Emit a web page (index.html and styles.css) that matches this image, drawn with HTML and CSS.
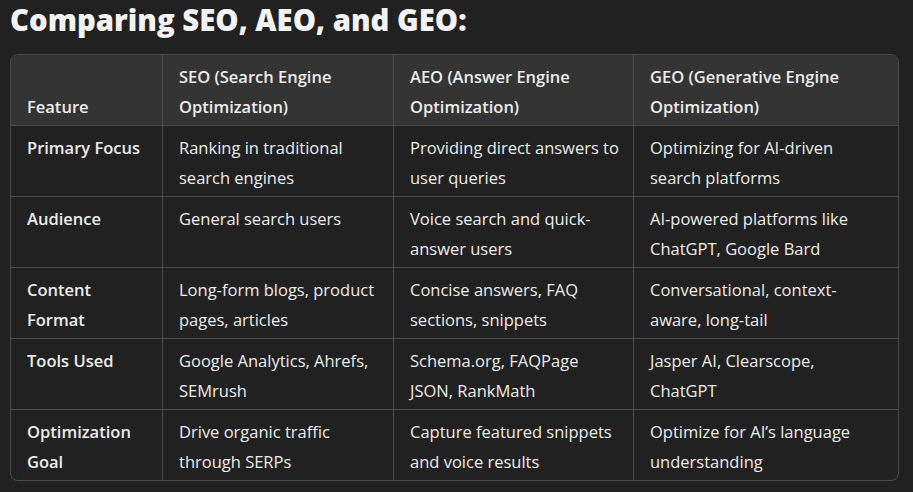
FILE: index.html
```html
<!DOCTYPE html>
<html>
<head>
<meta charset="utf-8">
<link rel="stylesheet" href="styles.css">
</head>
<body>
<h3 class="title">Comparing SEO, AEO, and GEO:</h3>
<div class="table-wrap">
<table class="cmp">
<thead>
<tr><th class="c1">Feature</th><th class="c2">SEO (Search Engine<br>Optimization)</th><th class="c3">AEO (Answer Engine<br>Optimization)</th><th class="c4">GEO (Generative Engine<br>Optimization)</th></tr>
</thead>
<tbody>
<tr><td class="lead">Primary Focus</td><td>Ranking in traditional<br>search engines</td><td>Providing direct answers to<br>user queries</td><td>Optimizing for AI-driven<br>search platforms</td></tr>
<tr><td class="lead">Audience</td><td>General search users</td><td>Voice search and quick-<br>answer users</td><td>AI-powered platforms like<br>ChatGPT, Google Bard</td></tr>
<tr><td class="lead">Content<br>Format</td><td>Long-form blogs, product<br>pages, articles</td><td>Concise answers, FAQ<br>sections, snippets</td><td>Conversational, context-<br>aware, long-tail</td></tr>
<tr><td class="lead">Tools Used</td><td>Google Analytics, Ahrefs,<br>SEMrush</td><td>Schema.org, FAQPage<br>JSON, RankMath</td><td>Jasper AI, Clearscope,<br>ChatGPT</td></tr>
<tr><td class="lead">Optimization<br>Goal</td><td>Drive organic traffic<br>through SERPs</td><td>Capture featured snippets<br>and voice results</td><td>Optimize for AI’s language<br>understanding</td></tr>
</tbody>
</table>
</div>
</body>
</html>
```
FILE: styles.css
```css
html, body {
  margin: 0;
  background: #212121;
}
body {
  padding: 0 10px;
  color: #ececec;
  font-family: "Open Sans", "Noto Sans", sans-serif;
  font-size: 16.5px;
}
.title {
  margin: 0 0 14px;
  font-family: "Open Sans", sans-serif;
  font-weight: 800;
  font-size: 29.3px;
  line-height: 40px;
  color: #f3f3f3;
}
.table-wrap {
  width: 889px;
  border: 1px solid #4b4b4b;
  border-radius: 8px;
  overflow: hidden;
  box-sizing: border-box;
}
.cmp {
  width: 100%;
  border-collapse: separate;
  border-spacing: 0;
  table-layout: fixed;
}
.cmp th, .cmp td {
  text-align: left;
  padding: 7px 8px 3px 16px;
  line-height: 30px;
  height: 60px;
  white-space: nowrap;
  border-right: 1px solid #4b4b4b;
  border-bottom: 1px solid #4b4b4b;
  vertical-align: top;
}
.cmp th:last-child, .cmp td:last-child { border-right: none; }
.cmp tbody tr:last-child td { border-bottom: none; }
.cmp thead th {
  background: #343434;
  font-weight: 600;
  vertical-align: bottom;
}
.cmp td.lead { font-weight: 600; }
.c1 { width: 127px; }
.c2 { width: 206px; }
.c3 { width: 215px; }
```
